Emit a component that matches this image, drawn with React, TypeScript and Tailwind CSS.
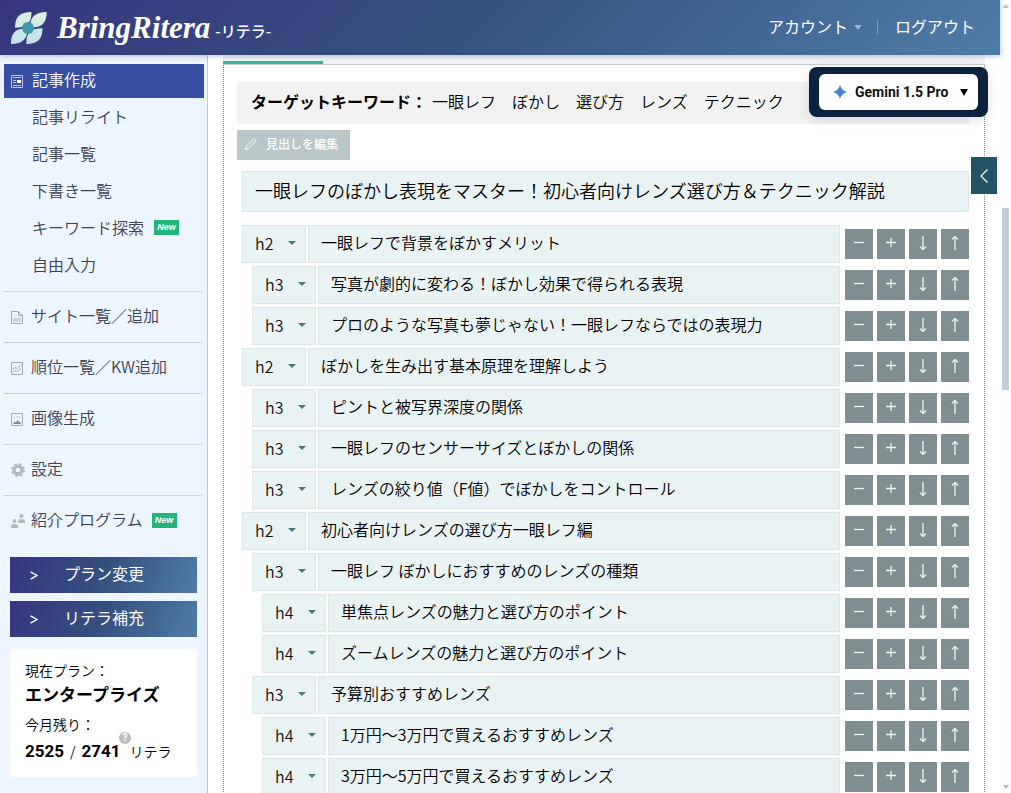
import { useState } from 'react'
import type { ReactNode } from 'react'

const subMenu = [
  { name: '記事リライト', isNew: false },
  { name: '記事一覧', isNew: false },
  { name: '下書き一覧', isNew: false },
  { name: 'キーワード探索', isNew: true },
  { name: '自由入力', isNew: false },
]

const initialHeadings = [
  { level: 'h2', text: '一眼レフで背景をぼかすメリット' },
  { level: 'h3', text: '写真が劇的に変わる！ぼかし効果で得られる表現' },
  { level: 'h3', text: 'プロのような写真も夢じゃない！一眼レフならではの表現力' },
  { level: 'h2', text: 'ぼかしを生み出す基本原理を理解しよう' },
  { level: 'h3', text: 'ピントと被写界深度の関係' },
  { level: 'h3', text: '一眼レフのセンサーサイズとぼかしの関係' },
  { level: 'h3', text: 'レンズの絞り値（F値）でぼかしをコントロール' },
  { level: 'h2', text: '初心者向けレンズの選び方一眼レフ編' },
  { level: 'h3', text: '一眼レフ ぼかしにおすすめのレンズの種類' },
  { level: 'h4', text: '単焦点レンズの魅力と選び方のポイント' },
  { level: 'h4', text: 'ズームレンズの魅力と選び方のポイント' },
  { level: 'h3', text: '予算別おすすめレンズ' },
  { level: 'h4', text: '1万円〜3万円で買えるおすすめレンズ' },
  { level: 'h4', text: '3万円〜5万円で買えるおすすめレンズ' },
]

const indents: Record<string, string> = {
  h2: 'pl-0',
  h3: 'pl-[10px]',
  h4: 'pl-[20px]',
}

function Logo() {
  return (
    <svg viewBox="0 0 36 32" className="h-8 w-9" aria-hidden="true">
      <defs>
        <linearGradient id="petal" x1="0" y1="0" x2="0" y2="32" gradientUnits="userSpaceOnUse">
          <stop offset="0" stopColor="#dcf0df" />
          <stop offset="1" stopColor="#bfe2ea" />
        </linearGradient>
      </defs>
      <g fill="url(#petal)">
        <path d="M20.500 0C20.500 10 17 15.700 4 15.700C4 4.500 9 0 20.500 0Z" />
        <path d="M35.700 0C35.700 11 31 15.700 19 15.700C19 5 24 0 35.700 0Z" />
        <path d="M0 32C0 21 4 16.300 16.500 16.300C16.500 27 12 32 0 32Z" />
        <path d="M15.300 32C15.300 21 19 16.300 31.500 16.300C31.500 27 27 32 15.300 32Z" />
      </g>
      <circle cx="17" cy="16" r="6" fill="#3f9aae" />
    </svg>
  )
}

function ArticleIcon() {
  return (
    <svg viewBox="0 0 12 13" className="h-[13px] w-3" fill="none" stroke="#b9c8ee" aria-hidden="true">
      <path d="M.5.5h11v12H.5z" />
      <path d="M2 2.500h8M2 5.500h3M2 7.500h3M2 10.500h8" />
      <path d="M6 5h4v3H6z" fill="#fff" stroke="none" />
    </svg>
  )
}

function SiteIcon() {
  return (
    <svg viewBox="0 0 12 13" className="h-[13px] w-3" fill="none" stroke="#a3abb8" aria-hidden="true">
      <path d="M.5.5h7l4 4v8H.5z" />
      <path d="M7.500.5v4h4" />
      <path d="M2 7h8v4H2z" fill="#ccd3dd" stroke="none" />
    </svg>
  )
}

function RankIcon() {
  return (
    <svg viewBox="0 0 12 13" className="h-[13px] w-3" fill="none" stroke="#a3abb8" aria-hidden="true">
      <path d="M.5.5h11v12H.5z" />
      <path d="M2 7l2-1.500 2 1 4-4M2 10l2-1.500 2 1L10 6.500" stroke="#8f98a6" strokeDasharray="1.500 .7" />
    </svg>
  )
}

function ImageIcon() {
  return (
    <svg viewBox="0 0 12 13" className="h-[13px] w-3" fill="none" stroke="#a3abb8" aria-hidden="true">
      <path d="M.5.5h11v12H.5z" />
      <path d="M2 11l1.500-2.500L5 9.500 6.500 7 8 9l1-.5L10 11z" fill="#7d8696" stroke="none" />
      <path d="M3 4.500h1M6 3.500h1M8 4.500h1" />
    </svg>
  )
}

function GearIcon() {
  return (
    <svg viewBox="0 0 14 14" className="h-[14px] w-[14px]" fill="none" stroke="#b4b8be" aria-hidden="true">
      <circle cx="7" cy="7" r="3.800" strokeWidth="3" />
      <circle cx="7" cy="7" r="5.900" strokeWidth="2" strokeDasharray="2.720 1.914" />
    </svg>
  )
}

function PeopleIcon() {
  return (
    <svg viewBox="0 0 14 14" className="h-[14px] w-[14px]" fill="#b4b8be" aria-hidden="true">
      <circle cx="10.500" cy="2" r="2" />
      <path d="M7 9V7.500Q7 5 10.500 5T14 7.500V9z" />
      <circle cx="3.500" cy="7" r="2" />
      <path d="M0 14v-1.500Q0 10 3.500 10T7 12.500V14z" />
    </svg>
  )
}

function NewBadge() {
  return (
    <span className="flex h-[15px] w-[25px] items-center justify-center bg-[#21b47b] pt-px font-['Liberation_Sans'] text-[9px] font-bold italic text-white">
      New
    </span>
  )
}

const menu = [
  { name: 'サイト一覧／追加', icon: SiteIcon, isNew: false },
  { name: '順位一覧／KW追加', icon: RankIcon, isNew: false },
  { name: '画像生成', icon: ImageIcon, isNew: false },
  { name: '設定', icon: GearIcon, isNew: false },
  { name: '紹介プログラム', icon: PeopleIcon, isNew: true },
]

function Header() {
  return (
    <header className="relative z-20 flex h-[55px] shrink-0 items-center justify-between bg-[linear-gradient(135deg,#36367f_0%,#35507f_45%,#4f7ca8_100%)] pl-[11px] pr-[25px] text-white shadow-[0_1px_5px_rgba(60,90,160,0.4)]">
      <a href="#" className="flex items-center">
        <Logo />
        <span className="ml-[10px] font-['Liberation_Serif'] text-[31px] font-bold italic leading-none">BringRitera</span>
        <span className="ml-[5px] mt-2 text-[15px] font-medium">-リテラ-</span>
      </a>
      <nav className="flex items-center pb-1 text-base font-normal leading-6">
        <button type="button" className="flex items-center gap-[6px]">
          アカウント
          <svg viewBox="0 0 8 5" className="mt-[3px] h-[5px] w-2" fill="#9db5cf" aria-hidden="true">
            <path d="M0 0h8L4 5z" />
          </svg>
        </button>
        <span className="mx-[15px] mt-[3px] h-[14px] w-px bg-[#7f9cbd]" />
        <a href="#" className="pl-[2px]">ログアウト</a>
      </nav>
    </header>
  )
}

function PlanButton({ children }: { children: ReactNode }) {
  return (
    <button
      type="button"
      className="flex h-9 items-center bg-[linear-gradient(110deg,#36367f_0%,#35507f_50%,#4f7ca8_100%)] pl-5 text-base font-normal text-white"
    >
      <svg viewBox="0 0 8 9" className="h-[9px] w-2" fill="none" stroke="#fff" strokeWidth="1.400" aria-hidden="true">
        <path d="M.5.8l6.500 3.700-6.500 3.700" />
      </svg>
      <span className="ml-[26px] pb-1">{children}</span>
    </button>
  )
}

function Sidebar() {
  return (
    <aside className="w-52 shrink-0 border-r border-[#c3c9d2] bg-[#edf5ff] pt-[9px] text-[#3e4353]">
      <nav className="pl-1 pr-[5px]">
        <a href="#" className="mr-[-2px] flex h-[34px] items-center bg-[#374ea2] pl-[7px] text-base text-white">
          <ArticleIcon />
          <span className="ml-[9px] pb-1">記事作成</span>
        </a>
        <ul className="pb-2">
          {subMenu.map((item) => (
            <li key={item.name}>
              <a href="#" className="flex h-[37px] items-center gap-[10px] pl-7 text-base">
                <span className="pb-[2px]">{item.name}</span>
                {item.isNew && <NewBadge />}
              </a>
            </li>
          ))}
        </ul>
        <ul>
          {menu.map((item) => (
            <li key={item.name} className="border-t border-dotted border-[#b5bcc8]">
              <a href="#" className="flex h-[50px] items-center pl-[7px] text-base">
                <span className="flex w-5 items-center">
                  <item.icon />
                </span>
                <span className="pb-1">{item.name}</span>
                {item.isNew && (
                  <span className="ml-[9px] pb-[2px]">
                    <NewBadge />
                  </span>
                )}
              </a>
            </li>
          ))}
        </ul>
      </nav>

      <div className="flex flex-col gap-2 px-[10px] pt-[11px]">
        <PlanButton>プラン変更</PlanButton>
        <PlanButton>リテラ補充</PlanButton>
        <section className="mt-1 rounded-[3px] bg-white px-[15px] pb-[11px] pt-[9px] text-sm text-black">
          <p className="leading-6">現在プラン：</p>
          <p className="text-[17px] font-bold leading-6">エンタープライズ</p>
          <p className="mt-[6px] leading-6">今月残り：</p>
          <p className="relative whitespace-nowrap leading-[30px]">
            <span className="font-[Roboto] text-[17px] font-bold">2525</span>
            <span className="mx-[6px]">/</span>
            <span className="font-[Roboto] text-[17px] font-bold">2741</span>
            <span className="absolute left-[94px] top-[-4px] flex h-3 w-3 items-center justify-center rounded-full bg-[#bdbdbd] font-[Roboto] text-[10px] font-bold leading-none text-white">
              ?
            </span>
            <span className="ml-[9px]">リテラ</span>
          </p>
        </section>
      </div>
    </aside>
  )
}

const actions = [
  { label: '削除', path: 'M2 6.500h10' },
  { label: '追加', path: 'M2 6.500h10M7 2v9' },
  { label: '下へ', path: 'M7 0v13M4 10.500l3 3 3-3' },
  { label: '上へ', path: 'M7 14V1M4 3.500l3-3 3 3' },
]

function HeadingRow({ level, text }: { level: string; text: string }) {
  return (
    <li className={`flex h-[38px] items-center ${indents[level]}`}>
      <span className="relative h-full w-16 shrink-0">
        <select
          defaultValue={level}
          aria-label="見出しレベル"
          className="h-full w-full appearance-none border border-[#dae8e9] bg-[#eaf3f4] pb-[3px] pl-3 text-base text-[#111]"
        >
          <option>h2</option>
          <option>h3</option>
          <option>h4</option>
        </select>
        <svg viewBox="0 0 8 4" className="pointer-events-none absolute right-[10px] top-[16px] h-1 w-2" fill="#447a78" aria-hidden="true">
          <path d="M0 0h8L4 4z" />
        </svg>
      </span>
      <input
        defaultValue={text}
        aria-label="見出し"
        className="ml-[2px] mr-[5px] h-full min-w-0 flex-1 border border-[#dae8e9] bg-[#eaf3f4] px-3 pb-[5px] text-base"
      />
      <div className="flex gap-1">
        {actions.map((action) => (
          <button key={action.label} type="button" aria-label={action.label} className="flex h-[30px] w-7 items-center justify-center bg-[#7f8f91] pb-[2px]">
            <svg viewBox="0 0 14 14" className="h-[14px] w-[14px]" fill="none" stroke="#eaf6ee" strokeWidth="1.300">
              <path d={action.path} />
            </svg>
          </button>
        ))}
      </div>
    </li>
  )
}

function ModelPicker() {
  return (
    <div className="absolute right-3 top-[12px] z-10 rounded-lg bg-[#0c2340] px-[10px] py-[7px] shadow-[0_3px_12px_rgba(0,0,0,0.12)]">
      <button type="button" className="flex h-9 w-[159px] items-center rounded-md bg-white pl-[14px] font-[Roboto] text-sm font-bold text-[#111]">
        <svg viewBox="0 0 14 14" className="h-[14px] w-[14px]" aria-hidden="true">
          <defs>
            <linearGradient id="spark" x1="0" y1="0" x2="1" y2="0">
              <stop offset="0" stopColor="#5a78c8" />
              <stop offset="1" stopColor="#2f8af0" />
            </linearGradient>
          </defs>
          <path d="M7 0Q8.500 5.500 14 7 8.500 8.500 7 14 5.500 8.500 0 7 5.500 5.500 7 0z" fill="url(#spark)" />
        </svg>
        <span className="ml-2 whitespace-nowrap">Gemini 1.5 Pro</span>
        <svg viewBox="0 0 8 7" className="ml-auto mr-[10px] h-[7px] w-2" aria-hidden="true">
          <path d="M0 0h8L4 7z" />
        </svg>
      </button>
    </div>
  )
}

export default function App() {
  const [title, setTitle] = useState('一眼レフのぼかし表現をマスター！初心者向けレンズ選び方＆テクニック解説')

  return (
    <div className="flex h-screen overflow-hidden bg-white font-['Noto_Sans_CJK_JP',sans-serif] font-[350] text-black">
      <div className="flex min-w-0 flex-1 flex-col">
        <Header />
        <div className="relative flex min-h-0 flex-1">
          <Sidebar />
          <main className="min-w-0 flex-1 overflow-hidden pl-[15px] pr-[15px]">
            <div className="flex h-[10px] items-end border-b border-[#c6cbcf] bg-[#f0f3f6]">
              <span className="h-[3px] w-[100px] bg-[#35b9a2]" />
            </div>
            <div className="border-x border-dotted border-[#8f8f8f] pb-10 pl-[13px] pr-[15px] pt-[17px]">
              <p className="flex h-[42px] items-center whitespace-pre bg-[#f2f2f2] px-[14px] pb-[5px] text-base">
                <b>ターゲットキーワード：</b>
                <span className="ml-[5px]">一眼レフ　ぼかし　選び方　レンズ　テクニック</span>
              </p>
              <button type="button" className="mt-[6px] flex h-[30px] items-center bg-[#b9c7c9] px-2 pb-[2px] text-xs font-medium text-white">
                <svg viewBox="0 0 12 12" className="mr-[9px] h-3 w-3" fill="none" stroke="#fff" strokeWidth=".9" aria-hidden="true">
                  <path d="M.5 11.500l.8-3L8.500 1.200q1-1 2 0t0 2L3.500 10.500z" />
                </svg>
                <span className="pr-1">見出しを編集</span>
              </button>
              <div className="mt-[11px] pl-[5px]">
                <input
                  value={title}
                  onChange={(e) => setTitle(e.target.value)}
                  aria-label="タイトル"
                  className="h-[41px] w-full border border-[#dae8e9] bg-[#eaf3f4] px-3 pb-[3px] text-lg"
                />
                <ul className="mt-[13px] flex flex-col gap-[3px]">
                  {initialHeadings.map((heading) => (
                    <HeadingRow key={heading.text} level={heading.level} text={heading.text} />
                  ))}
                </ul>
              </div>
            </div>
          </main>
          <ModelPicker />
          <button type="button" aria-label="パネルを開く" className="absolute right-[3px] top-[102px] flex h-[37px] w-[26px] items-center justify-center bg-[#225363]">
            <svg viewBox="0 0 8 14" className="h-[14px] w-2" fill="none" stroke="#fff" strokeWidth="1.300">
              <path d="M7.500.5L1 7l6.500 6.500" />
            </svg>
          </button>
        </div>
      </div>
      {/* scroll rail */}
      <div className="flex w-[11px] shrink-0 flex-col items-center justify-between bg-[#fdfdfd] py-1">
        <svg viewBox="0 0 6 4" className="h-1 w-[6px]" fill="#bdbdbd">
          <path d="M0 4h6L3 0z" />
        </svg>
        <div className="flex w-[7px] flex-1 flex-col pt-[200px]">
          <span className="h-[182px] bg-[#c0cedb]" />
        </div>
        <svg viewBox="0 0 6 4" className="h-1 w-[6px]" fill="#bdbdbd">
          <path d="M0 0h6L3 4z" />
        </svg>
      </div>
    </div>
  )
}
